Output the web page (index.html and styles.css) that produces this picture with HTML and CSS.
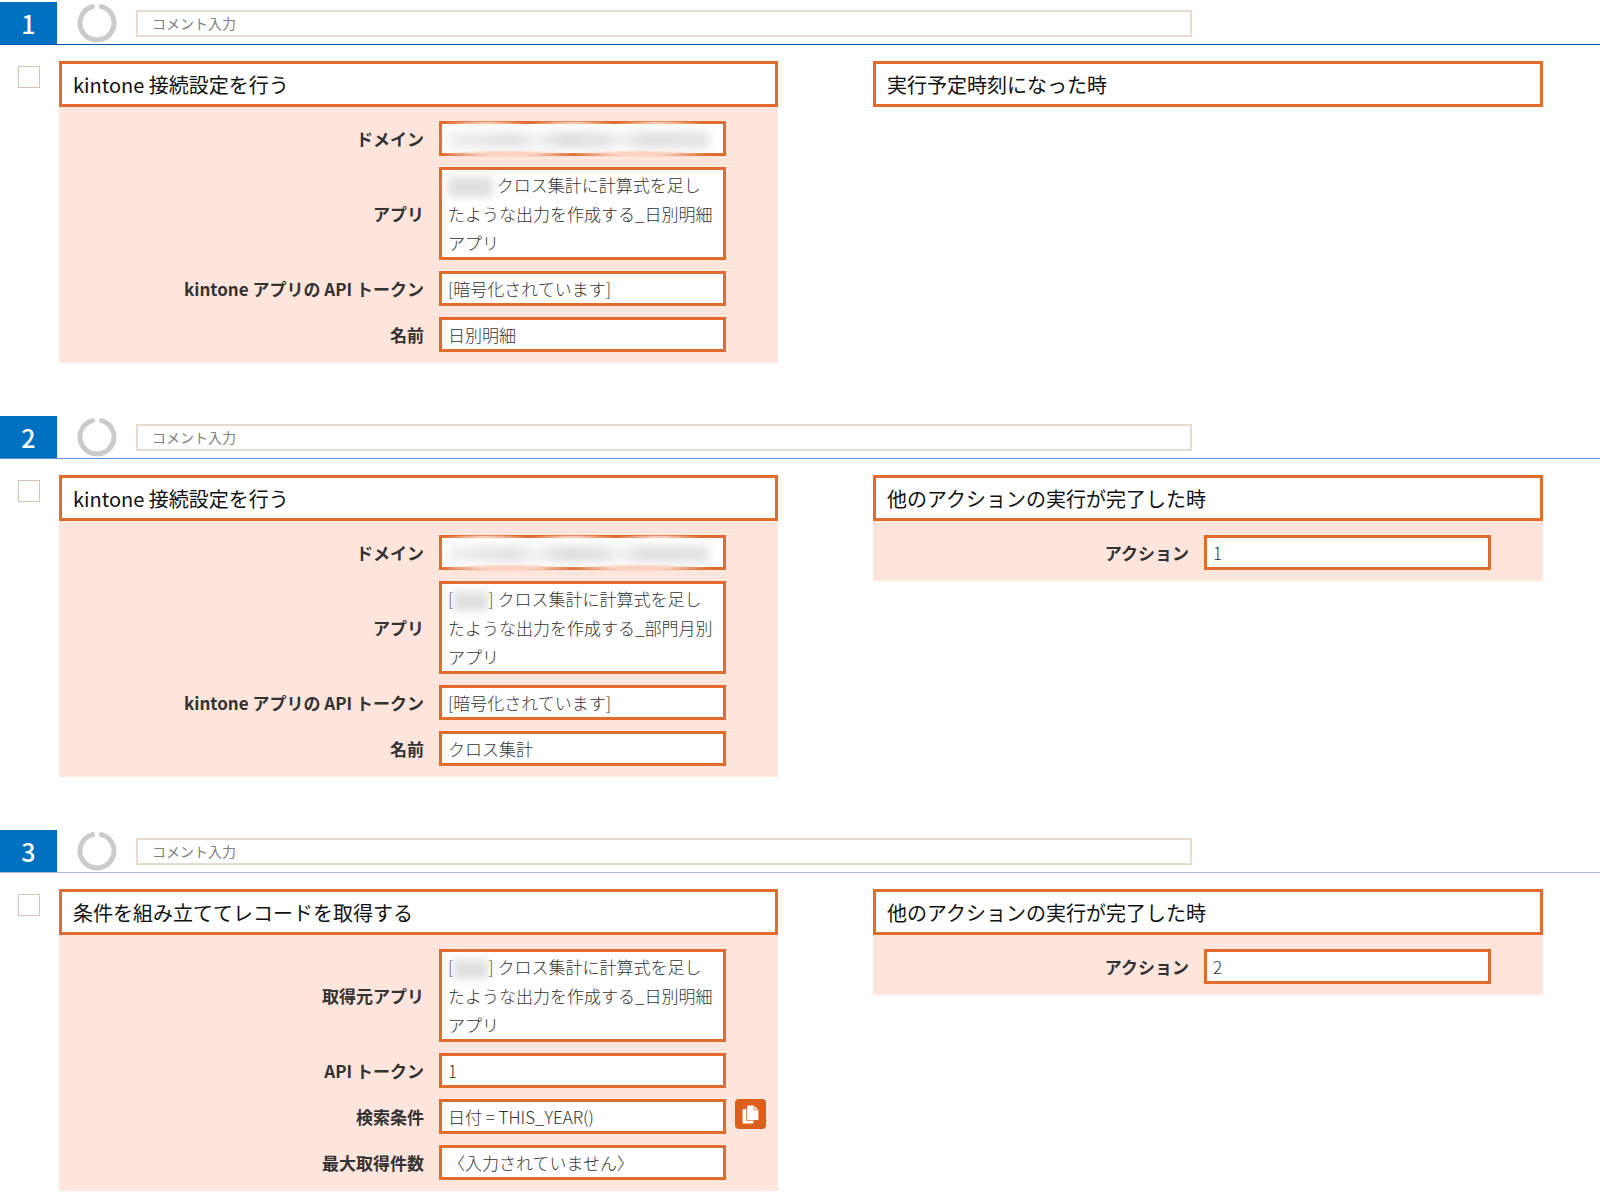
FILE: index.html
```html
<!DOCTYPE html>
<html lang="ja">
  <head>
    <meta charset="UTF-8" />
    <meta name="viewport" content="width=device-width, initial-scale=1.0" />
    <title>アクション一覧</title>
    <link rel="stylesheet" href="styles.css">
  </head>
  <body>
    <svg class="symbols" aria-hidden="true">
      <symbol id="ring" viewBox="0 0 40 40">
        <path d="M24.5 3.6A17 17 0 1 1 15.5 3.6" fill="none" stroke="#cbcbcb" stroke-width="5" stroke-linecap="round" />
      </symbol>
    </svg>

    <section class="action">
      <div class="action-header">
        <span class="number">1</span>
        <svg class="ring"><use href="#ring" /></svg>
        <input type="text" class="comment" placeholder="コメント入力" aria-label="コメント入力" />
      </div>
      <div class="action-body">
        <input type="checkbox" class="check" aria-label="アクション1を選択" />
        <div class="panel">
          <h2>kintone 接続設定を行う</h2>
          <dl>
            <dt>ドメイン</dt>
            <dd class="masked"><span class="mask-line"></span></dd>
            <dt>アプリ</dt>
            <dd><span class="mask wide"></span> クロス集計に計算式を足したような出力を作成する_日別明細アプリ</dd>
            <dt>kintone アプリの API トークン</dt>
            <dd>[暗号化されています]</dd>
            <dt>名前</dt>
            <dd>日別明細</dd>
          </dl>
        </div>
        <div class="panel">
          <h2>実行予定時刻になった時</h2>
        </div>
      </div>
    </section>

    <section class="action">
      <div class="action-header">
        <span class="number">2</span>
        <svg class="ring"><use href="#ring" /></svg>
        <input type="text" class="comment" placeholder="コメント入力" aria-label="コメント入力" />
      </div>
      <div class="action-body">
        <input type="checkbox" class="check" aria-label="アクション2を選択" />
        <div class="panel">
          <h2>kintone 接続設定を行う</h2>
          <dl>
            <dt>ドメイン</dt>
            <dd class="masked"><span class="mask-line"></span></dd>
            <dt>アプリ</dt>
            <dd>[<span class="mask"></span>] クロス集計に計算式を足したような出力を作成する_部門月別アプリ</dd>
            <dt>kintone アプリの API トークン</dt>
            <dd>[暗号化されています]</dd>
            <dt>名前</dt>
            <dd>クロス集計</dd>
          </dl>
        </div>
        <div class="panel">
          <h2>他のアクションの実行が完了した時</h2>
          <dl>
            <dt>アクション</dt>
            <dd>1</dd>
          </dl>
        </div>
      </div>
    </section>

    <section class="action">
      <div class="action-header">
        <span class="number">3</span>
        <svg class="ring"><use href="#ring" /></svg>
        <input type="text" class="comment" placeholder="コメント入力" aria-label="コメント入力" />
      </div>
      <div class="action-body">
        <input type="checkbox" class="check" aria-label="アクション3を選択" />
        <div class="panel">
          <h2>条件を組み立ててレコードを取得する</h2>
          <dl>
            <dt>取得元アプリ</dt>
            <dd>[<span class="mask"></span>] クロス集計に計算式を足したような出力を作成する_日別明細アプリ</dd>
            <dt>API トークン</dt>
            <dd>1</dd>
            <dt>検索条件</dt>
            <dd>
              日付 = THIS_YEAR()
              <button type="button" class="copy" aria-label="コピー">
                <svg width="17" height="19" viewBox="0 0 17 19">
                  <path d="M1 4.500h3.500V15H11v3H1z" fill="#fff" stroke="#fff" stroke-linejoin="round" />
                  <path d="M5.500 1H12l4 4v9.500H5.500z" fill="#fff" stroke="#fff" stroke-linejoin="round" />
                  <path d="M4.500 3v12.500H13M12 1v4h4" fill="none" stroke="#e58a5a" />
                </svg>
              </button>
            </dd>
            <dt>最大取得件数</dt>
            <dd>〈入力されていません〉</dd>
          </dl>
        </div>
        <div class="panel">
          <h2>他のアクションの実行が完了した時</h2>
          <dl>
            <dt>アクション</dt>
            <dd>2</dd>
          </dl>
        </div>
      </div>
    </section>
  </body>
</html>
```
FILE: styles.css
```css
* {
  box-sizing: border-box;
}
body {
  margin: 0;
  padding-top: 2px;
  background-color: #fff;
  color: #333;
  font-family: "Noto Sans CJK JP", sans-serif;
  font-size: 17px;
}
.symbols {
  display: none;
}
.action + .action {
  margin-top: 53px;
}
.action-header {
  display: flex;
  align-items: center;
  height: 43px;
  border-bottom: 1px solid #0058b5;
}
.action:nth-of-type(2) .action-header {
  border-color: #6293d6;
}
.action:nth-of-type(3) .action-header {
  border-color: #a9bce2;
}
.number {
  width: 57px;
  background-color: #0070c0;
  color: #fff;
  font-size: 25px;
  font-weight: 500;
  line-height: 42px;
  text-align: center;
}
.ring {
  width: 40px;
  height: 40px;
  margin: 0 19px 0 20px;
}
.comment {
  width: 66%;
  height: 27px;
  padding: 0 14px;
  border: 2px solid #e6dccf;
  background-color: #fff;
  font-family: inherit;
  font-size: 14px;
}
.comment::placeholder {
  color: #808080;
}
.action-body {
  display: grid;
  grid-template-columns: 41px 719fr 765fr;
  align-items: start;
  padding: 16px 57px 0 18px;
}
.check {
  appearance: none;
  width: 22px;
  height: 22px;
  margin: 5px 0 0;
  border: 1px solid #d6c4b0;
  background-color: #fff;
}
.panel {
  background-color: #ffe5dc;
}
.panel + .panel {
  margin-left: 95px;
}
h2 {
  height: 46px;
  margin: 0;
  padding: 0 11px;
  border: 3px solid #e06c2e;
  background-color: #fff;
  color: #111;
  font-size: 20px;
  font-weight: 400;
  line-height: 42px;
}
dl {
  display: grid;
  grid-template-columns: 1fr 287px;
  gap: 11px 15px;
  align-items: center;
  margin: 0;
  padding: 14px 52px 11px 0;
}
dt {
  font-weight: 700;
  line-height: 29px;
  text-align: right;
}
dd {
  position: relative;
  min-height: 35px;
  margin: 0;
  padding: 0 6px;
  border: 3px solid #e06c2e;
  background-color: #fff;
  font-weight: 300;
  line-height: 29px;
}
/* Hidden values */
.mask {
  display: inline-block;
  width: 35px;
  height: 20px;
  background-color: #e0e0e0;
  filter: blur(4px);
  vertical-align: middle;
}
.mask.wide {
  width: 45px;
}
.mask-line {
  display: block;
  height: 16px;
  margin: 8px 8px 0 0;
  background: linear-gradient(90deg, #efefef, #e2e2e2 25%, #f2f2f2 34%, #dcdcdc 45%, #e4e4e4 60%, #f2f2f2 66%, #dfdfdf 75%, #e2e2e2);
  filter: blur(5px);
}
.masked::after {
  content: "";
  position: absolute;
  inset: -3px 18px -5px 0;
  background:
    radial-gradient(ellipse at center, #fbd3c0 30%, transparent 72%) 0 100% / 50% 8px repeat-x,
    radial-gradient(ellipse at center, #fbd9c9 10%, transparent 70%) 0 0 / 33% 4px repeat-x;
}
/* Sits beside the value box */
.copy {
  position: absolute;
  top: -3px;
  left: 293px;
  display: flex;
  align-items: center;
  justify-content: center;
  width: 31px;
  height: 30px;
  padding: 0;
  border: 0;
  border-radius: 4px;
  background-color: #dc601c;
}
```
